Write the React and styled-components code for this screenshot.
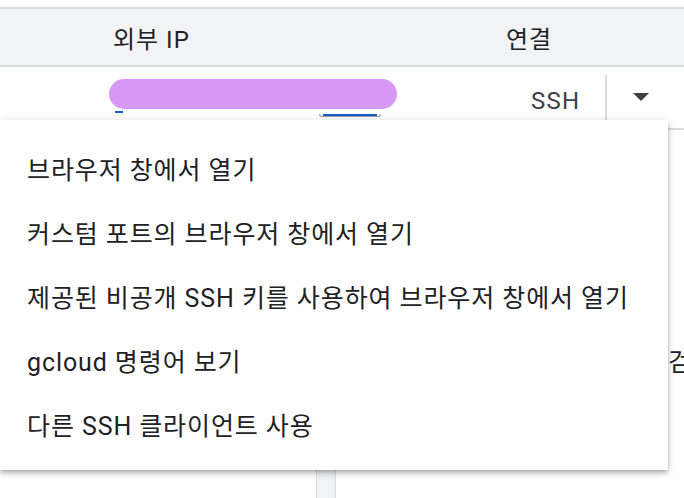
import React from 'react';
import styled, { createGlobalStyle } from 'styled-components';

const GlobalStyle = createGlobalStyle`
    body {
        margin: 0;
        background: #ffffff;
        font-family: Roboto, "Noto Sans CJK KR", sans-serif;
        color: #202124;
    }
`

const menuItems = [
    '브라우저 창에서 열기',
    '커스텀 포트의 브라우저 창에서 열기',
    '제공된 비공개 SSH 키를 사용하여 브라우저 창에서 열기',
    'gcloud 명령어 보기',
    '다른 SSH 클라이언트 사용',
];

const App = () => {
    return (
        <Page>
            <GlobalStyle />
            <TopGap />
            <HeaderRow>
                <HeaderCell>외부 IP</HeaderCell>
                <HeaderCell>연결</HeaderCell>
            </HeaderRow>
            <DataRow>
                <IpCell>
                    <LinkLine $width={8} />
                    <LinkBracket>
                        <LinkLine $width={54} />
                    </LinkBracket>
                    <Redaction />
                </IpCell>
                <SshLabel>SSH</SshLabel>
                <Divider />
                <DropButton>
                    <svg width="16" height="8" viewBox="0 0 16 8">
                        <path d="M0 0 L16 0 L8 8 Z" fill="#3c4043" />
                    </svg>
                </DropButton>
            </DataRow>
            <Body>
                <LeftPanel />
                <Splitter />
                <RightPanel>
                    <CutText>검색</CutText>
                </RightPanel>
            </Body>

            <Menu>
                {menuItems.map((label) => (
                    <MenuItem key={label}>{label}</MenuItem>
                ))}
            </Menu>
        </Page>
    )
}

export default App

const Page = styled.div`
    position: relative;
    width: 684px;
    height: 498px;
    overflow: hidden;
    display: flex;
    flex-direction: column;
`

const TopGap = styled.div`
    height: 7px;
`

const HeaderRow = styled.div`
    height: 56px;
    display: grid;
    grid-template-columns: 393px 1fr;
    align-items: center;
    padding-left: 113px;
    background: #f1f3f4;
    border-top: 2px solid #dadce0;
    border-bottom: 2px solid #dadce0;
`

const HeaderCell = styled.div`
    font-size: 24px;
    color: #202124;
    letter-spacing: 1px;
`

const DataRow = styled.div`
    height: 61px;
    display: flex;
    align-items: stretch;
    border-bottom: 2px solid #dadce0;
`

const IpCell = styled.div`
    position: relative;
    flex-shrink: 0;
    width: 288px;
    margin-left: 109px;
    display: flex;
    align-items: flex-end;
    padding: 0 0 15px 6px;
`

const LinkLine = styled.div`
    width: ${p => p.$width}px;
    height: 2px;
    background: #1a5fd0;
`

const LinkBracket = styled.div`
    margin-left: 196px;
    margin-bottom: -4px;
    padding: 0 3px;
    border: 1px solid #9aa0a6;
    border-top: none;
    border-radius: 0 0 3px 3px;
`

const Redaction = styled.div`
    position: absolute;
    left: 0;
    top: 12px;
    width: 288px;
    height: 30px;
    border-radius: 15px;
    background: #d899f6;
`

const SshLabel = styled.div`
    margin-left: 128px;
    display: flex;
    align-items: center;
    padding-top: 6px;
    font-size: 24px;
    letter-spacing: 1.2px;
    color: #3c4043;
`

const Divider = styled.div`
    width: 2px;
    margin: 8px 0 0 25px;
    background: #dadce0;
`

const DropButton = styled.div`
    display: flex;
    align-items: center;
    padding: 0 0 2px 26px;
`

const Body = styled.div`
    flex: 1;
    display: flex;
`

const LeftPanel = styled.div`
    flex-shrink: 0;
    width: 316px;
`

const Splitter = styled.div`
    flex-shrink: 0;
    width: 18px;
    background: #f1f3f4;
    border-left: 1px solid #dadce0;
    border-right: 1px solid #dadce0;
`

const RightPanel = styled.div`
    flex: 1;
    min-width: 0;
    overflow: hidden;
    padding: 212px 0 0 332px;
    white-space: nowrap;
`

const CutText = styled.div`
    font-size: 25px;
    letter-spacing: 0.9px;
    color: #202124;
`

const Menu = styled.div`
    position: absolute;
    top: 120px;
    left: 0;
    width: 668px;
    padding: 16px 0 14px;
    background: #ffffff;
    box-shadow: 0 2px 4px -1px rgba(0, 0, 0, 0.2), 0 4px 5px 0 rgba(0, 0, 0, 0.14), 0 1px 10px 0 rgba(0, 0, 0, 0.12);
`

const MenuItem = styled.div`
    height: 64px;
    display: flex;
    align-items: center;
    padding-left: 27px;
    font-size: 25px;
    letter-spacing: 0.9px;
    color: #202124;
    white-space: nowrap;
`
